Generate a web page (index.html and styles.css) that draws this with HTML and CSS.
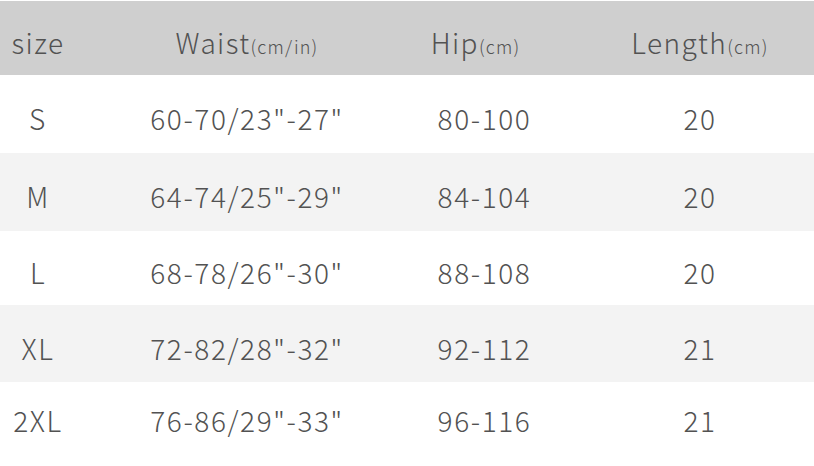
FILE: index.html
```html
<!DOCTYPE html>
<html>
<head>
<meta charset="utf-8">
<link rel="stylesheet" href="styles.css">
</head>
<body>
<div class="table">
  <div class="row head">
    <div class="cell c1">size</div>
    <div class="cell c2">Waist<small>(cm/in)</small></div>
    <div class="cell c3">Hip<small>(cm)</small></div>
    <div class="cell c4">Length<small>(cm)</small></div>
  </div>
  <div class="row r1">
    <div class="cell c1">S</div>
    <div class="cell c2">60-70/23"-27"</div>
    <div class="cell c3">80-100</div>
    <div class="cell c4">20</div>
  </div>
  <div class="row alt r2">
    <div class="cell c1">M</div>
    <div class="cell c2">64-74/25"-29"</div>
    <div class="cell c3">84-104</div>
    <div class="cell c4">20</div>
  </div>
  <div class="row r3">
    <div class="cell c1">L</div>
    <div class="cell c2">68-78/26"-30"</div>
    <div class="cell c3">88-108</div>
    <div class="cell c4">20</div>
  </div>
  <div class="row alt r4">
    <div class="cell c1">XL</div>
    <div class="cell c2">72-82/28"-32"</div>
    <div class="cell c3">92-112</div>
    <div class="cell c4">21</div>
  </div>
  <div class="row r5">
    <div class="cell c1">2XL</div>
    <div class="cell c2">76-86/29"-33"</div>
    <div class="cell c3">96-116</div>
    <div class="cell c4">21</div>
  </div>
</div>
</body>
</html>
```
FILE: styles.css
```css
html, body {
  margin: 0;
  padding: 0;
  background: #ffffff;
}
body {
  width: 814px;
  height: 466px;
  overflow: hidden;
  padding-top: 1px;
  box-sizing: border-box;
  font-family: "Noto Sans CJK SC", "Noto Sans", sans-serif;
  color: #525252;
}
.table {
  display: flex;
  flex-direction: column;
}
.row {
  display: grid;
  grid-template-columns: 76px 342px 124px 1fr;
  align-items: center;
  font-size: 28px;
  font-weight: 300;
  letter-spacing: 1.6px;
}
.row.head {
  height: 74px;
  background: #cfcfcf;
  font-size: 28px;
  letter-spacing: 1.4px;
}
.row.alt {
  background: #f3f3f3;
}
.r1 { height: 78px; }
.r2 { height: 78px; }
.r3 { height: 74px; }
.r4 { height: 77px; }
.r5 { height: 68px; }
.cell {
  text-align: center;
  white-space: nowrap;
  line-height: 1;
  padding-top: 8px;
}
.c3 {
  padding-left: 9px;
}
.head .c3 {
  padding-left: 0;
  padding-right: 9px;
}
.c4 {
  padding-left: 44px;
}
.head small {
  font-size: 18px;
  letter-spacing: 1.2px;
}
```
